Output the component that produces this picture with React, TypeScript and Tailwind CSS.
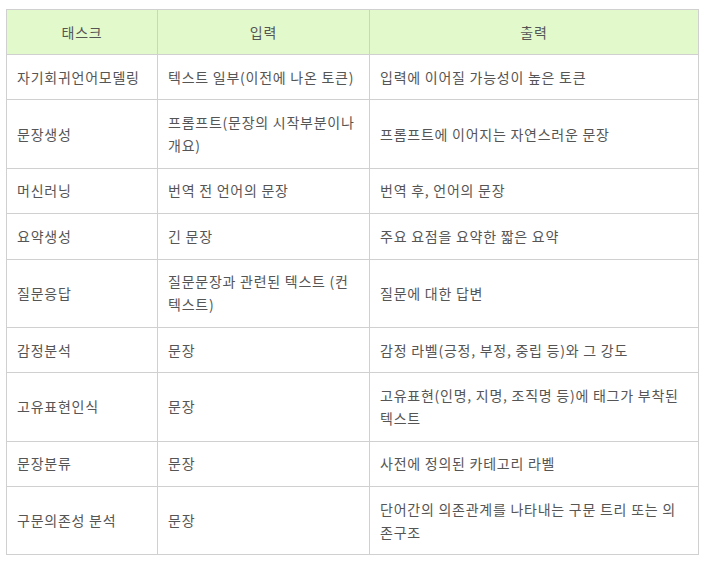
const rows: [string, string, string][] = [
  ["자기회귀언어모델링", "텍스트 일부(이전에 나온 토큰)", "입력에 이어질 가능성이 높은 토큰"],
  ["문장생성", "프롬프트(문장의 시작부분이나 개요)", "프롬프트에 이어지는 자연스러운 문장"],
  ["머신러닝", "번역 전 언어의 문장", "번역 후, 언어의 문장"],
  ["요약생성", "긴 문장", "주요 요점을 요약한 짧은 요약"],
  ["질문응답", "질문문장과 관련된 텍스트 (컨텍스트)", "질문에 대한 답변"],
  ["감정분석", "문장", "감정 라벨(긍정, 부정, 중립 등)와 그 강도"],
  ["고유표현인식", "문장", "고유표현(인명, 지명, 조직명 등)에 태그가 부착된 텍스트"],
  ["문장분류", "문장", "사전에 정의된 카테고리 라벨"],
  ["구문의존성 분석", "문장", "단어간의 의존관계를 나타내는 구문 트리 또는 의존구조"],
];

export default function App() {
  return (
    <div
      className="bg-white pl-[6px] pt-[9px] text-[14px] leading-[23px] tracking-[0.75px] text-[#555]"
      style={{ fontFamily: '"Noto Sans CJK KR", "Noto Sans", sans-serif' }}
    >
      <table className="w-[692px] table-fixed border-collapse">
        <colgroup>
          <col className="w-[151px]" />
          <col className="w-[212px]" />
          <col className="w-[329px]" />
        </colgroup>
        <thead>
          <tr className="bg-[#e2f9cb]">
            {["태스크", "입력", "출력"].map((h) => (
              <th
                key={h}
                className="h-[45px] border border-[#d0d0d0] px-[10px] text-center font-normal"
              >
                {h}
              </th>
            ))}
          </tr>
        </thead>
        <tbody>
          {rows.map((r) => (
            <tr key={r[0]}>
              {r.map((c, i) => (
                <td
                  key={i}
                  className="border border-[#d0d0d0] px-[10px] py-[10.7px] text-left align-middle"
                >
                  {c}
                </td>
              ))}
            </tr>
          ))}
        </tbody>
      </table>
    </div>
  );
}
